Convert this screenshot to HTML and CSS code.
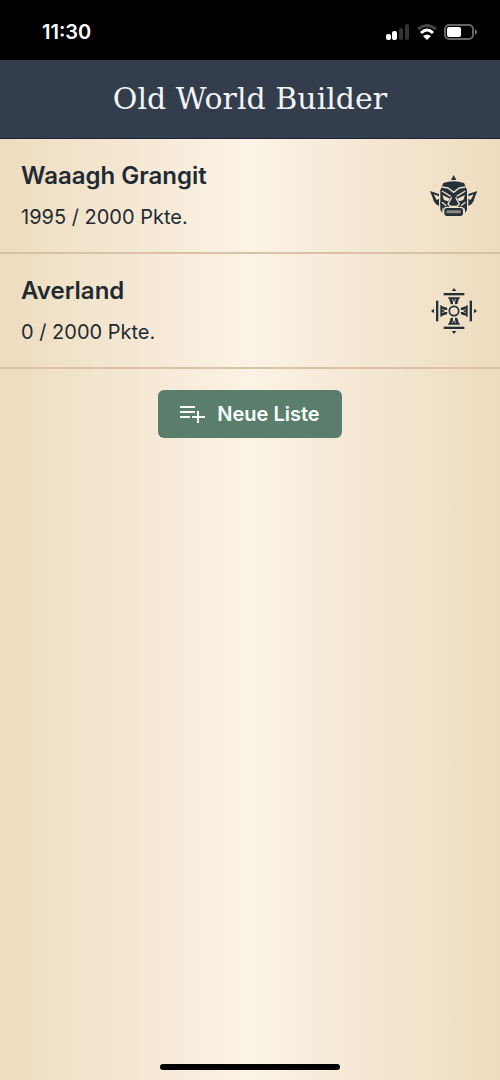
FILE: index.html
```
<!DOCTYPE html>
<html lang="de">
<head>
  <meta charset="UTF-8">
  <meta name="viewport" content="width=device-width, initial-scale=1.0">
  <title>Old World Builder</title>
  <link rel="stylesheet" href="styles.css">
</head>
<body>
  <div class="status-bar">
    <span class="time">11:30</span>
    <div class="status-icons">
      <svg width="24" height="16" viewBox="0 0 24 16" aria-hidden="true">
        <rect x="0" y="10" width="5" height="6" rx="2" fill="#fff"/>
        <rect x="6" y="7" width="5" height="9" rx="2" fill="#fff"/>
        <rect x="13" y="4" width="4" height="12" rx="2" fill="#333"/>
        <rect x="19" y="0" width="4" height="16" rx="2" fill="#333"/>
      </svg>
      <svg width="20" height="16" viewBox="0 0 20 16" aria-hidden="true">
        <path d="M1 5Q10-2 19 5" fill="none" stroke="#444" stroke-width="3"/>
        <path d="M4 9Q10 3 16 9" fill="none" stroke="#fff" stroke-width="3"/>
        <path d="M6 12Q10 9 14 12L10 16z" fill="#fff"/>
      </svg>
      <svg width="33" height="16" viewBox="0 0 33 16" aria-hidden="true">
        <rect x="1" y="1" width="28" height="14" rx="4" fill="none" stroke="#666" stroke-width="2"/>
        <rect x="3" y="3" width="14" height="10" rx="2" fill="#fff"/>
        <path d="M31 5v6q2-1 2-3t-2-3z" fill="#777"/>
      </svg>
    </div>
  </div>

  <header class="header">
    <h1>Old World Builder</h1>
  </header>

  <main>
    <ul class="list">
      <li>
        <a class="list-item" href="#waaagh-grangit">
          <div>
            <h2>Waaagh Grangit</h2>
            <p>1995 / 2000 Pkte.</p>
          </div>
          <svg class="army-icon" viewBox="0 -6 144 144" aria-hidden="true">
            <!-- crest and head -->
            <path d="M71 6l8 15H63z"/>
            <path d="M40 30q31-10 62 0l9 22v42l-8 14H39l-8-14V52z"/>
            <!-- ears -->
            <path d="M0 54l27 9v7L11 64l9 17 7-4v22l-9-5q-8-8-10-20zM142 54l-27 9v7l16-6-9 17-7-4v22l9-5q8-8 10-20z"/>
            <!-- tusk lines beside the jaw -->
            <path d="M31 88l6 6v25l-6-8zM111 88l-6 6v25l6-8z"/>
            <g class="cut">
              <path d="M36 42l18 3 17 13 17-13 18-3"/>
              <path d="M36 54l26 16M106 54L80 70"/>
              <path d="M36 88l13 10M106 88l-13 10"/>
              <path d="M65 73l-11 20 7 7h20l7-7-11-20"/>
            </g>
            <path class="eye" d="M37 66l23 11-6 8-12-4zM105 66L82 77l6 8 12-4z"/>
            <!-- jaw -->
            <rect class="jaw" x="41" y="103" width="60" height="28" rx="10"/>
            <rect class="mouth" x="49" y="112" width="44" height="9" rx="4"/>
          </svg>
        </a>
      </li>
      <li>
        <a class="list-item" href="#averland">
          <div>
            <h2>Averland</h2>
            <p>0 / 2000 Pkte.</p>
          </div>
          <svg class="army-icon" viewBox="0 -6 144 144" aria-hidden="true">
            <defs>
              <g id="cross-arm">
                <path d="M72 0l7 9H65z"/>
                <path d="M41 15h62v7H41z"/>
                <path d="M54 28h36l-2 5H56z"/>
                <path d="M57 31h9l3 12v6l-7-1zM87 31h-9l-3 12v6l7-1z"/>
                <path d="M69 31h6l-1 9h-4z"/>
              </g>
            </defs>
            <use href="#cross-arm"/>
            <use href="#cross-arm" transform="rotate(90 72 69)"/>
            <use href="#cross-arm" transform="rotate(180 72 69)"/>
            <use href="#cross-arm" transform="rotate(270 72 69)"/>
            <circle class="ring" cx="72" cy="69" r="14"/>
          </svg>
        </a>
      </li>
    </ul>
    <button class="button" type="button">
      <svg width="25" height="18" viewBox="0 0 25 18" aria-hidden="true">
        <path d="M0 2h15M0 7h15M0 12h10M12 12h13M18 6v12" fill="none" stroke="currentColor" stroke-width="2"/>
      </svg>
      Neue Liste
    </button>
  </main>

  <div class="home-indicator"></div>
</body>
</html>
```
FILE: styles.css
```
* {
  box-sizing: border-box;
}

body {
  display: flex;
  flex-direction: column;
  min-height: 100vh;
  margin: 0;
  background: linear-gradient(90deg, #eddcbf 0%, #f5e8d3 27%, #fbf3e5 50%, #f5e8d3 73%, #eddcbf 100%);
  color: #1f2a33;
  font-family: Inter, "Liberation Sans", sans-serif;
}

h1, h2, p, ul {
  margin: 0;
  padding: 0;
}

.status-bar {
  display: flex;
  align-items: center;
  justify-content: space-between;
  height: 60px;
  padding: 4px 23px 0 42px;
  background-color: #000;
  color: #fff;
}

.time {
  font-size: 20px;
  font-weight: 600;
}

.status-icons {
  display: flex;
  align-items: center;
  gap: 7px;
}

.header {
  padding: 20px;
  border-bottom: 1px solid #1d2240;
  background-color: #343d4c;
  color: #f0f5f5;
  text-align: center;
}

.header h1 {
  font-family: "DejaVu Serif", serif;
  font-size: 30px;
  font-weight: 400;
  line-height: 38px;
}

main {
  flex: 1;
  text-align: center;
}

.list {
  list-style: none;
  text-align: left;
}

.list-item {
  display: flex;
  align-items: center;
  justify-content: space-between;
  padding: 20px 22px 21px 21px;
  border-bottom: 2px solid #d9c3a8;
  color: inherit;
  text-decoration: none;
}

.list-item h2 {
  margin-bottom: 10px;
  font-size: 24px;
  font-weight: 600;
  line-height: 34px;
}

.list-item p {
  font-size: 20px;
  line-height: 28px;
}

.army-icon {
  width: 48px;
  height: 48px;
  fill: #24303a;
}

.cut {
  fill: none;
  stroke: #f0e1c8;
  stroke-width: 4;
}

.eye {
  fill: #f0e1c8;
}

.jaw {
  stroke: #f0e1c8;
  stroke-width: 4;
}

.mouth {
  fill: #8b8880;
}

.ring {
  fill: none;
  stroke: #24303a;
  stroke-width: 5;
}

.button {
  display: inline-flex;
  align-items: center;
  gap: 12px;
  margin-top: 21px;
  padding: 10px 22px;
  border: none;
  border-radius: 6px;
  background-color: #5a7e6b;
  color: #f8fffb;
  font-family: inherit;
  font-size: 20px;
  font-weight: 600;
  line-height: 28px;
  cursor: pointer;
}

.home-indicator {
  width: 36%;
  height: 6px;
  margin: 0 auto 10px;
  border-radius: 3px;
  background-color: #000;
}
```
